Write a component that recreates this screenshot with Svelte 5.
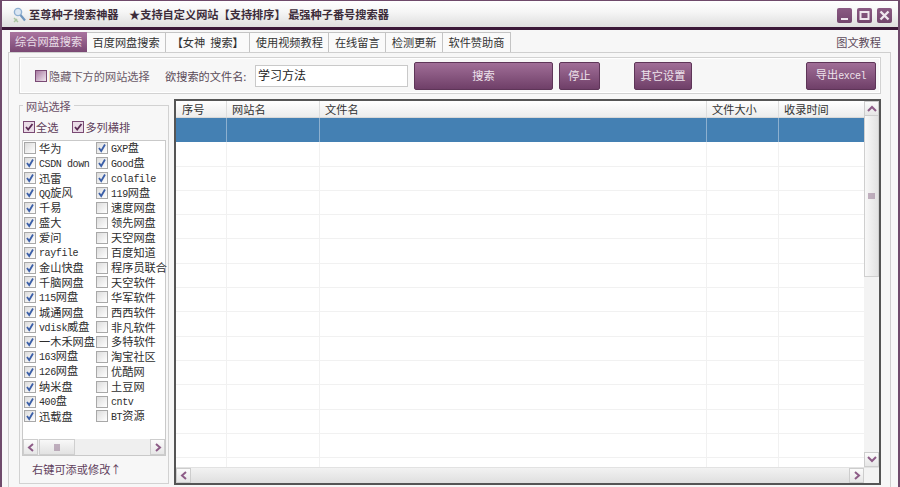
<script>
  const tabs = ['综合网盘搜索', '百度网盘搜索', '【女神  搜索】', '使用视频教程', '在线留言', '检测更新', '软件赞助商'];

  const sites = [
    ['华为', 0], ['GXP盘', 1],
    ['CSDN down', 1], ['Good盘', 1],
    ['迅雷', 1], ['colafile', 1],
    ['QQ旋风', 1], ['119网盘', 1],
    ['千易', 1], ['速度网盘', 0],
    ['盛大', 1], ['领先网盘', 0],
    ['爱问', 1], ['天空网盘', 0],
    ['rayfile', 1], ['百度知道', 0],
    ['金山快盘', 1], ['程序员联合', 0],
    ['千脑网盘', 1], ['天空软件', 0],
    ['115网盘', 1], ['华军软件', 0],
    ['城通网盘', 1], ['西西软件', 0],
    ['vdisk威盘', 1], ['非凡软件', 0],
    ['一木禾网盘', 1], ['多特软件', 0],
    ['163网盘', 1], ['淘宝社区', 0],
    ['126网盘', 1], ['优酷网', 0],
    ['纳米盘', 1], ['土豆网', 0],
    ['400盘', 1], ['cntv', 0],
    ['迅载盘', 1], ['BT资源', 0]
  ];

  const columns = ['序号', '网站名', '文件名', '文件大小', '收录时间'];
  const rows = Array.from({ length: 14 }, (_, i) => i);

  // latin runs use a narrower mono face so they sit at half the CJK width
  const split = (s) => s.match(/[\x20-\x7e]+|[^\x20-\x7e]+/g);
  const isLatin = (s) => /^[\x20-\x7e]+$/.test(s);
</script>

<div class="window">
  <header class="titlebar">
    <svg class="logo" width="13" height="16" viewBox="0 0 13 16">
      <circle cx="5" cy="5" r="3.6" fill="#dbe6f2" stroke="#8fb0d2" stroke-width="1.4" />
      <path d="M7.5 8 L12 13.5" stroke="#6f95bd" stroke-width="2.2" />
      <path d="M1 11 L5 15 M1 15 L4 12" stroke="#a9c4a0" stroke-width="1.5" />
    </svg>
    <span class="app-name">至尊种子搜索神器</span>
    <span class="app-slogan">★支持自定义网站【支持排序】 最强种子番号搜索器</span>
    <div class="winbtns">
      <button class="winbtn" aria-label="minimize">
        <svg width="15" height="15" viewBox="0 0 15 15"><rect x="4" y="10" width="7" height="2" fill="#efe6ee" /></svg>
      </button>
      <button class="winbtn" aria-label="maximize">
        <svg width="15" height="15" viewBox="0 0 15 15"><rect x="3.5" y="4" width="8" height="7" fill="none" stroke="#efe6ee" stroke-width="2" /></svg>
      </button>
      <button class="winbtn" aria-label="close">
        <svg width="15" height="15" viewBox="0 0 15 15"><path d="M3.5 3.5 L11.5 11.5 M11.5 3.5 L3.5 11.5" stroke="#efe6ee" stroke-width="2.4" /></svg>
      </button>
    </div>
  </header>

  <nav class="tabs">
    {#each tabs as tab, i}
      <div class="tab" class:active={i === 0}>{tab}</div>
    {/each}
    <span class="help">图文教程</span>
  </nav>

  <main class="panel">
    <section class="toolbar">
      <span class="hide-box"></span>
      <span class="hide-label">隐藏下方的网站选择</span>
      <span class="name-label">欲搜索的文件名:</span>
      <div class="search-input">学习方法</div>
      <button class="btn search">搜索</button>
      <button class="btn stop">停止</button>
      <button class="btn settings">其它设置</button>
      <button class="btn export">导出<span class="lat">excel</span></button>
    </section>

    <div class="body">
      <aside class="sites">
        <div class="legend">网站选择</div>
        <div class="site-opts">
          <span class="opt"><span class="pbox"><svg width="10" height="10" viewBox="0 0 10 10"><path d="M2 5 L4.2 7.5 L8.5 2" fill="none" stroke="#5b2b55" stroke-width="1.8" /></svg></span>全选</span>
          <span class="opt"><span class="pbox"><svg width="10" height="10" viewBox="0 0 10 10"><path d="M2 5 L4.2 7.5 L8.5 2" fill="none" stroke="#5b2b55" stroke-width="1.8" /></svg></span>多列横排</span>
        </div>
        <div class="site-list">
          <div class="site-grid">
            {#each sites as [name, on]}
              <div class="site">
                <span class="cb">
                  {#if on}
                    <svg width="10" height="10" viewBox="0 0 10 10"><path d="M2 5 L4.2 8 L8 1.5" fill="none" stroke="#3b5fa8" stroke-width="1.8" /></svg>
                  {/if}
                </span>
                <span class="site-name">
                  {#each split(name) as part}
                    {#if isLatin(part)}<span class="lat">{part}</span>{:else}{part}{/if}
                  {/each}
                </span>
              </div>
            {/each}
          </div>
          <div class="hscroll small">
            <span class="sbtn"><svg width="8" height="9" viewBox="0 0 8 9"><path d="M6 1 L2 4.5 L6 8" fill="none" stroke="#8d5c87" stroke-width="2" /></svg></span>
            <span class="list-thumb"><svg width="7" height="7" viewBox="0 0 7 7"><path d="M1 0V7M3 0V7M5 0V7" stroke="#8d6c8a" /></svg></span>
            <span class="spacer"></span>
            <span class="sbtn"><svg width="8" height="9" viewBox="0 0 8 9"><path d="M2 1 L6 4.5 L2 8" fill="none" stroke="#8d5c87" stroke-width="2" /></svg></span>
          </div>
        </div>
        <div class="note">右键可添或修改↑</div>
      </aside>

      <section class="results">
        <div class="results-main">
          <div class="table">
            <div class="row head">
              {#each columns as c}<div class="cell">{c}</div>{/each}
            </div>
            <div class="row selected">
              {#each columns as c}<div class="cell"></div>{/each}
            </div>
            {#each rows as r}
              <div class="row">
                {#each columns as c}<div class="cell"></div>{/each}
              </div>
            {/each}
          </div>
          <div class="vscroll">
            <span class="sbtn v"><svg width="10" height="7" viewBox="0 0 10 7"><path d="M1 6 L5 2 L9 6" fill="none" stroke="#8d5c87" stroke-width="2" /></svg></span>
            <span class="v-thumb"><svg width="7" height="7" viewBox="0 0 7 7"><path d="M0 1H7M0 3H7M0 5H7" stroke="#8d6c8a" /></svg></span>
            <span class="spacer"></span>
            <span class="sbtn v"><svg width="10" height="7" viewBox="0 0 10 7"><path d="M1 1 L5 5 L9 1" fill="none" stroke="#8d5c87" stroke-width="2" /></svg></span>
          </div>
        </div>
        <div class="hscroll">
          <span class="sbtn"><svg width="8" height="9" viewBox="0 0 8 9"><path d="M6 1 L2 4.5 L6 8" fill="none" stroke="#8d5c87" stroke-width="2" /></svg></span>
          <span class="h-thumb"></span>
          <span class="sbtn"><svg width="8" height="9" viewBox="0 0 8 9"><path d="M2 1 L6 4.5 L2 8" fill="none" stroke="#8d5c87" stroke-width="2" /></svg></span>
          <span class="corner"></span>
        </div>
      </section>
    </div>
  </main>
</div>

<style>
  :global(body) {
    margin: 0;
    background: #f7f7f7;
  }

  .window {
    box-sizing: border-box;
    width: 900px;
    height: 487px;
    overflow: hidden;
    display: flex;
    flex-direction: column;
    background: #f7f7f7;
    border-left: 2px solid #6f4a6b;
    border-right: 2px solid #6f4a6b;
    border-top: 1px solid #6f4a6b;
    font-family: "Noto Sans CJK SC", "Liberation Sans", sans-serif;
    font-size: 11.2px;
    color: #2a2a2a;
  }

  .titlebar {
    flex: none;
    box-sizing: border-box;
    height: 29px;
    padding: 1px 6px 0 11px;
    display: flex;
    align-items: center;
    background: linear-gradient(#ffffff, #f6f6f6 40%, #dedede);
    border-bottom: 3px solid #3b1838;
    font-weight: 700;
    color: #3c2c3a;
  }

  .logo {
    margin-right: 3px;
  }

  .app-name {
    width: 100px;
    flex: none;
    line-height: 1;
  }

  .app-slogan {
    line-height: 1;
  }

  .winbtns {
    margin-left: auto;
    margin-top: 2px;
    display: flex;
    gap: 5px;
  }

  .winbtn {
    width: 15px;
    height: 15px;
    padding: 0;
    border: 0;
    border-radius: 2px;
    background: linear-gradient(#8a5a83, #74466e);
    display: block;
  }

  .winbtn svg {
    display: block;
  }

  .tabs {
    flex: none;
    box-sizing: border-box;
    height: 22px;
    padding: 2px 8px 0 8px;
    display: flex;
    align-items: flex-end;
  }

  .tab {
    box-sizing: border-box;
    height: 20px;
    padding: 0 5.5px;
    white-space: pre;
    line-height: 19px;
    background: #fafafa;
    border: 1px solid #c4c4c4;
    border-left: 0;
    border-bottom: 0;
    color: #333;
  }

  .tab.active {
    width: 77px;
    border: 0;
    padding: 0 5px;
    color: #eadfe8;
    background: linear-gradient(#a9749f, #7a4873);
  }

  .help {
    margin-left: auto;
    margin-right: 9px;
    align-self: center;
    color: #5c4a5a;
  }

  .panel {
    flex: 1;
    min-height: 0;
    margin: 0 7px 0 6px;
    padding: 4px 9px 0 10px;
    border: 1px solid #cfcfcf;
    border-bottom: 0;
    background: #f7f7f7;
    display: flex;
    flex-direction: column;
    gap: 5px;
  }

  .toolbar {
    flex: none;
    box-sizing: border-box;
    height: 37px;
    display: flex;
    align-items: center;
    border: 1px solid #d2d2d2;
    box-shadow: inset 0 0 0 1px #fff;
    color: #5a4a58;
  }

  .hide-box {
    width: 12px;
    height: 12px;
    box-sizing: border-box;
    margin-left: 15px;
    border: 1px solid #7a4a74;
    background: linear-gradient(135deg, #a87aa2, #f0e6ee);
  }

  .hide-label {
    margin-left: 2px;
    width: 116px;
    color: #6a5a68;
  }

  .name-label {
    width: 90px;
  }

  .search-input {
    box-sizing: border-box;
    width: 153px;
    height: 22px;
    padding-left: 2px;
    line-height: 18px;
    background: #fff;
    border: 1px solid #c9c9c9;
    color: #222;
    font-size: 12px;
  }

  .btn {
    box-sizing: border-box;
    height: 28px;
    padding: 0;
    border: 1px solid #5e3558;
    border-radius: 2px;
    background: linear-gradient(#a06e97, #6f3f68);
    color: #eee3ec;
    font-family: inherit;
    font-size: 11.2px;
    line-height: 1;
  }

  .search {
    width: 139px;
    margin-left: 6px;
  }

  .stop {
    width: 41px;
    margin-left: 6px;
  }

  .settings {
    width: 58px;
    margin-left: 34px;
  }

  .export {
    width: 70px;
    margin-left: 114px;
  }

  .lat {
    font-family: "Liberation Mono", monospace;
    font-size: 10px;
    letter-spacing: -0.4px;
    font-weight: 400;
  }

  .body {
    flex: 1;
    min-height: 0;
    display: flex;
    gap: 5px;
  }

  .sites {
    position: relative;
    box-sizing: border-box;
    width: 150px;
    height: 379px;
    margin-top: 6px;
    padding: 0 2px;
    border: 1px solid #d2d2d2;
    display: flex;
    flex-direction: column;
  }

  .legend {
    position: absolute;
    top: -7px;
    left: 3px;
    padding: 0 3px;
    background: #f7f7f7;
    color: #6a4f67;
    line-height: 15px;
  }

  .site-opts {
    flex: none;
    height: 34px;
    padding: 13px 0 0 1px;
    box-sizing: border-box;
    display: flex;
    gap: 14px;
    color: #5f3f5b;
  }

  .opt {
    display: flex;
    align-items: center;
    height: 16px;
  }

  .pbox {
    box-sizing: border-box;
    width: 12px;
    height: 12px;
    margin-right: 1px;
    border: 1px solid #7a4a74;
    background: #eadce7;
    display: flex;
    align-items: center;
    justify-content: center;
  }

  .site-list {
    flex: none;
    box-sizing: border-box;
    height: 316px;
    border: 1px solid #c9c9c9;
    background: #fff;
    display: flex;
    flex-direction: column;
  }

  .site-grid {
    flex: 1;
    padding: 0 0 0 1px;
    display: grid;
    grid-template-columns: 72px 72px;
    grid-auto-rows: 14.9px;
  }

  .site {
    display: flex;
    align-items: center;
    white-space: nowrap;
    line-height: 1;
  }

  .site-name {
    color: #2d2d2d;
  }

  .cb {
    box-sizing: border-box;
    flex: none;
    width: 12px;
    height: 12px;
    margin-right: 3px;
    border: 1px solid #a8a8a8;
    background: linear-gradient(135deg, #dcdcdc, #fff);
    display: flex;
    align-items: center;
    justify-content: center;
  }

  .hscroll {
    flex: none;
    height: 15px;
    display: flex;
    background: #efefef;
    border-top: 1px solid #e2e2e2;
  }

  .hscroll.small {
    height: 16px;
    border-top: 0;
  }

  .sbtn {
    box-sizing: border-box;
    flex: none;
    width: 15px;
    display: flex;
    align-items: center;
    justify-content: center;
    background: linear-gradient(#fbfbfb, #e6e6e6);
    border: 1px solid #cdcdcd;
  }

  .sbtn.v {
    width: auto;
    height: 15px;
  }

  .spacer {
    flex: 1;
  }

  .list-thumb {
    box-sizing: border-box;
    width: 36px;
    margin-left: 1px;
    display: flex;
    align-items: center;
    justify-content: center;
    background: linear-gradient(#f8f8f8, #e2e2e2);
    border: 1px solid #cfcfcf;
  }

  .note {
    padding: 6px 0 0 10px;
    color: #60405c;
    line-height: 15px;
  }

  .results {
    box-sizing: border-box;
    flex: 1;
    min-width: 0;
    height: 386px;
    border: 2px solid #555;
    background: #fff;
    display: flex;
    flex-direction: column;
  }

  .results-main {
    flex: 1;
    min-height: 0;
    display: flex;
  }

  .table {
    flex: 1;
    min-width: 0;
    overflow: hidden;
  }

  .row {
    height: 24.3px;
    display: grid;
    grid-template-columns: 51px 93px 387px 72px 87px;
    border-bottom: 1px solid #f1f1f1;
    box-sizing: border-box;
  }

  .cell {
    border-right: 1px solid #f1f1f1;
  }

  .row.head {
    height: 17px;
    background: linear-gradient(#ffffff, #ececec);
    border-bottom: 1px solid #d8d8d8;
    line-height: 16px;
    color: #333;
  }

  .row.head .cell {
    padding-left: 5px;
    border-right: 1px solid #dedede;
  }

  .row.head .cell:first-child {
    padding-left: 6px;
  }

  .row.selected {
    background: #4480b3;
    border-bottom: 0;
  }

  .row.selected .cell {
    border-right-color: #8db0cf;
  }

  .vscroll {
    flex: none;
    width: 15px;
    background: #f3f3f3;
    display: flex;
    flex-direction: column;
  }

  .v-thumb {
    box-sizing: border-box;
    height: 161px;
    display: flex;
    align-items: center;
    justify-content: center;
    background: linear-gradient(90deg, #f8f8f8, #e2e2e2);
    border: 1px solid #cfcfcf;
    border-top: 0;
  }

  .h-thumb {
    flex: 1;
    background: linear-gradient(#f2f2f2, #dfdfdf);
  }

  .corner {
    flex: none;
    width: 15px;
    background: #f3f3f3;
  }
</style>
